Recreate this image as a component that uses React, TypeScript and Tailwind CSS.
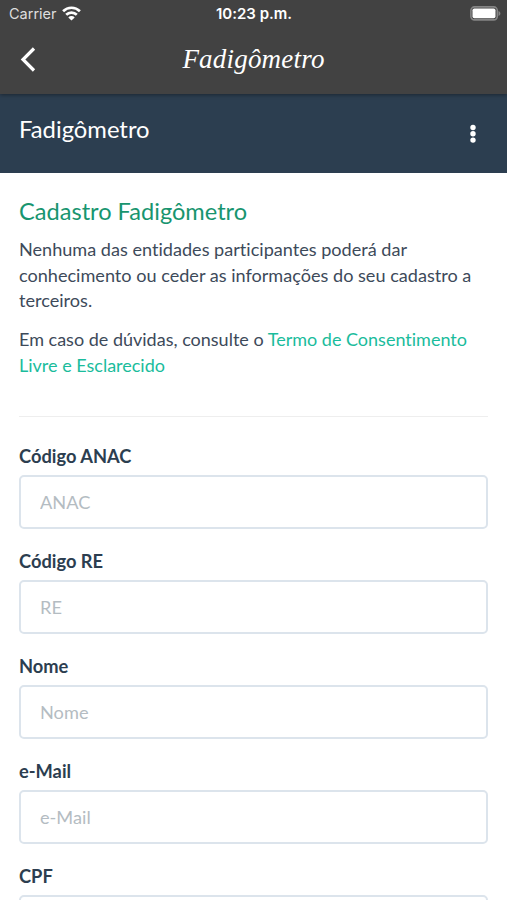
import { useState } from 'react';

interface Field {
  name: string;
  label: string;
  placeholder: string;
}

const FIELDS: Field[] = [
  { name: 'anac', label: 'Código ANAC', placeholder: 'ANAC' },
  { name: 're', label: 'Código RE', placeholder: 'RE' },
  { name: 'nome', label: 'Nome', placeholder: 'Nome' },
  { name: 'email', label: 'e-Mail', placeholder: 'e-Mail' },
  { name: 'cpf', label: 'CPF', placeholder: 'CPF' },
];

const WifiIcon = () => (
  <svg width="19" height="15" viewBox="0 0 19 15" fill="none" stroke="white" strokeWidth="2.7">
    <path d="M1.1 5.2a12 12 0 0 1 16.8 0" />
    <path d="M4.2 8.8a7.5 7.5 0 0 1 10.6 0" />
    <path d="M9.5 14.5 6.3 11.4a4.6 4.6 0 0 1 6.4 0z" fill="white" stroke="none" />
  </svg>
);

const BatteryIcon = () => (
  <svg width="31" height="15" viewBox="0 0 31 15" fill="none">
    <rect x="0.9" y="0.9" width="26.4" height="13" rx="3.6" stroke="#858585" strokeWidth="1.6" />
    <rect x="2.5" y="2.5" width="23" height="9.8" rx="1.8" fill="white" />
    <path d="M28.5 5v5c1.2-.4 1.9-1.4 1.9-2.5S29.7 5.4 28.5 5z" fill="#858585" />
  </svg>
);

const StatusBar = () => (
  <div className="grid h-[27px] grid-cols-3 items-center pl-[9px] pr-[6px] font-['Inter',sans-serif] text-white">
    <div className="flex items-center gap-[5px] text-[14.5px] text-[#dedede]">
      <span>Carrier</span>
      <WifiIcon />
    </div>
    <span className="-ml-0.5 pt-px text-center text-[15px] font-semibold">10:23 p.m.</span>
    <div className="flex justify-end">
      <BatteryIcon />
    </div>
  </div>
);

export default function App() {
  const [values, setValues] = useState<Record<string, string>>({});

  return (
    <div className="h-[900px] overflow-hidden bg-white font-['Lato',sans-serif] text-[#2c3e50] [font-variant-ligatures:none]">
      {/* Barra superior do app */}
      <header className="relative h-[94px] bg-[#424242] shadow-[0_1px_4px_rgba(0,0,0,0.4)]">
        <StatusBar />
        <div className="grid h-[64px] grid-cols-[60px_1fr_60px] items-center">
          <button type="button" aria-label="Voltar" className="pl-5">
            <svg width="16" height="25" viewBox="0 0 16 25" fill="none" stroke="white" strokeWidth="3.2">
              <path d="M14 1.5 3 12.5l11 11" />
            </svg>
          </button>
          <h1 className="text-center font-['Liberation_Serif',serif] text-[27px] italic tracking-[0.2px] text-white">
            Fadigômetro
          </h1>
        </div>
      </header>

      {/* Título da página */}
      <div className="flex h-[79px] items-center justify-between bg-[#2c3e50] pl-[19px] pr-[30px] text-white">
        <h2 className="pb-[8px] text-[23.8px]">Fadigômetro</h2>
        <button type="button" aria-label="Menu">
          <svg width="8" height="20" viewBox="0 0 8 20" fill="white">
            <circle cx="4" cy="3.5" r="2.7" />
            <circle cx="4" cy="9.8" r="2.7" />
            <circle cx="4" cy="16.1" r="2.7" />
          </svg>
        </button>
      </div>

      <main className="px-[19px]">
        <h3 className="pt-[22px] text-[23.6px] leading-[32px] text-[#18956f]">Cadastro Fadigômetro</h3>
        <p className="mt-[10px] text-[18.1px] leading-[25.6px] text-[#3d4a5a]">
          Nenhuma das entidades participantes poderá dar conhecimento ou ceder as informações do seu cadastro a
          terceiros.
        </p>
        <p className="mt-[12px] text-[18px] leading-[26px] text-[#3d4a5a]">
          Em caso de dúvidas, consulte o{' '}
          <a href="#termo" className="text-[#1abc9c]">
            Termo de Consentimento Livre e Esclarecido
          </a>
        </p>

        <hr className="mt-[38px] border-[#eeeeee]" />

        <form className="mt-[26px]">
          {FIELDS.map((field) => (
            <div key={field.name} className="h-[105px]">
              <label htmlFor={field.name} className="block h-[32px] text-[18.3px] font-bold leading-[26px]">
                {field.label}
              </label>
              <input
                id={field.name}
                value={values[field.name] ?? ''}
                onChange={(e) => setValues({ ...values, [field.name]: e.target.value })}
                placeholder={field.placeholder}
                className="block h-[54px] w-full rounded-[5px] border-2 border-[#dce4ec] px-[19px] text-[18.2px] placeholder:text-[#b4bcc2]"
              />
            </div>
          ))}
        </form>
      </main>
    </div>
  );
}
